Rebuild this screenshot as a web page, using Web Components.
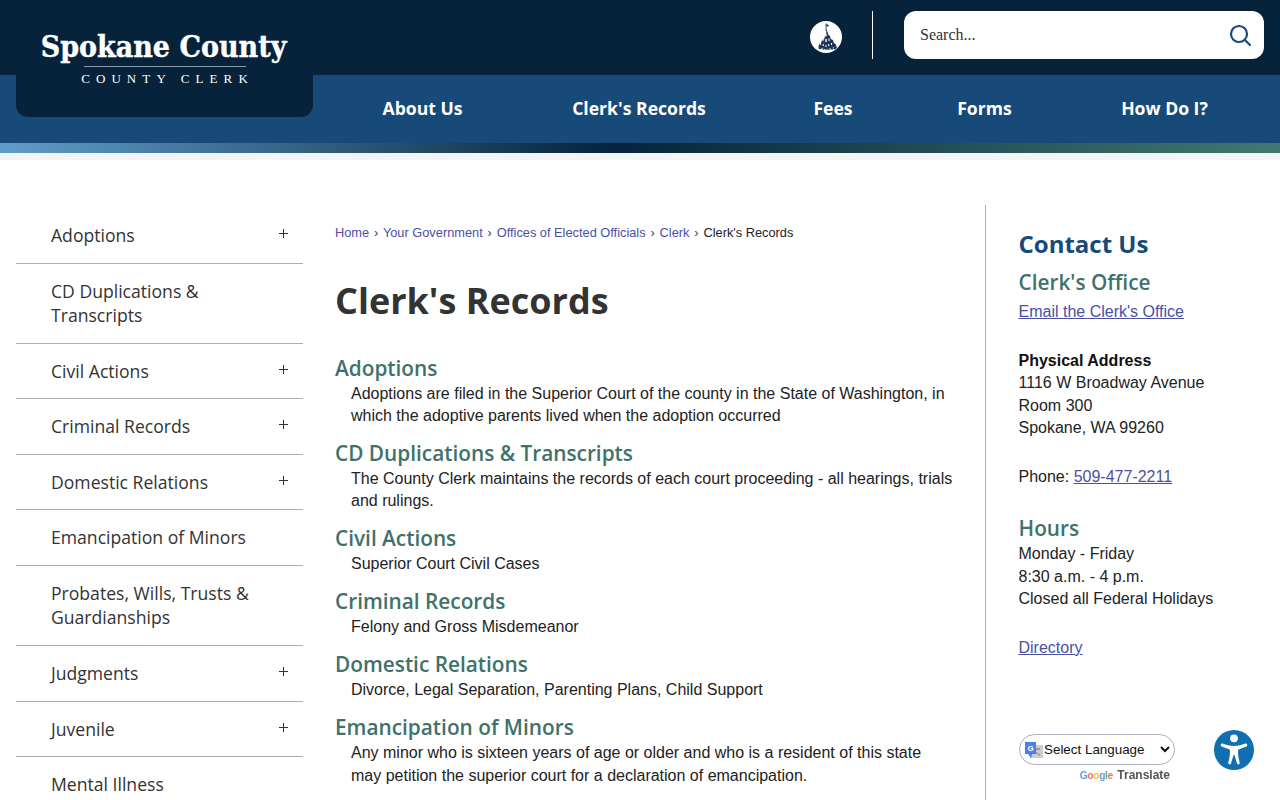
<!DOCTYPE html>
<html lang="en">
<head>
<meta charset="UTF-8">
<title>Clerk's Records</title>
<style>
    html, body { margin: 0; height: 800px; overflow: hidden; background: #fff; }
    body { font-family: "Liberation Sans", Arial, sans-serif; }
    .page { display: grid; grid-template-columns: 335px 650px 1fr; padding-top: 45px; }
</style>
</head>
<body>
<spk-header></spk-header>
<div class="page">
    <spk-side-nav>
        <spk-side-item more>Adoptions</spk-side-item>
        <spk-side-item>CD Duplications &amp; Transcripts</spk-side-item>
        <spk-side-item more>Civil Actions</spk-side-item>
        <spk-side-item more>Criminal Records</spk-side-item>
        <spk-side-item more>Domestic Relations</spk-side-item>
        <spk-side-item>Emancipation of Minors</spk-side-item>
        <spk-side-item>Probates, Wills, Trusts &amp; Guardianships</spk-side-item>
        <spk-side-item more style="padding-bottom:15.5px">Judgments</spk-side-item>
        <spk-side-item more>Juvenile</spk-side-item>
        <spk-side-item>Mental Illness</spk-side-item>
    </spk-side-nav>
    <spk-main>
        <spk-section title="Adoptions">Adoptions are filed in the Superior Court of the county in the State of Washington, in which the adoptive parents lived when the adoption occurred</spk-section>
        <spk-section title="CD Duplications &amp; Transcripts">The County Clerk maintains the records of each court proceeding - all hearings, trials and rulings.</spk-section>
        <spk-section title="Civil Actions">Superior Court Civil Cases</spk-section>
        <spk-section title="Criminal Records">Felony and Gross Misdemeanor</spk-section>
        <spk-section title="Domestic Relations">Divorce, Legal Separation, Parenting Plans, Child Support</spk-section>
        <spk-section title="Emancipation of Minors">Any minor who is sixteen years of age or older and who is a resident of this state may petition the superior court for a declaration of emancipation.</spk-section>
    </spk-main>
    <spk-contact></spk-contact>
</div>
<spk-translate></spk-translate>
<spk-access></spk-access>

<script>
class SpkHeader extends HTMLElement {
    connectedCallback() {
        this.attachShadow({ mode: 'open' });
        let items = ['About Us', "Clerk's Records", 'Fees', 'Forms', 'How Do I?'];
        this.shadowRoot.innerHTML = `
        <style>
            :host { display: block; position: relative; }
            .top { height: 75px; background: #06233b; display: flex; justify-content: flex-end; align-items: center; padding: 0 16px 5px; box-sizing: border-box; }
            .seal { width: 32px; height: 32px; margin-right: 30px; margin-top: 4px; display: block; flex: none; }
            .rule { width: 1px; height: 48px; background: #fff; margin-right: 31px; }
            .search { width: 360px; height: 48px; background: #fff; border-radius: 12px; display: flex; align-items: center; justify-content: space-between; padding: 0 12px 0 16px; box-sizing: border-box; font: 16px "Liberation Serif", serif; color: #333; }
            .search svg { width: 24px; height: 24px; }
            nav { height: 68px; background: #174a78; display: grid; grid-template-columns: 185px 248px 140px 163px 197px; align-items: center; padding: 0 0 2px 330px; box-sizing: border-box; text-align: center; }
            nav a { font: 700 17.6px "Open Sans", sans-serif; color: #fff; text-decoration: none; }
            .strip { height: 10px; background: linear-gradient(90deg, #5f9dc8 0%, #06233b 48%, #41796f 100%); }
            .pale { height: 7px; background: #f2f4f6; }
            .logo { position: absolute; left: 16px; top: 0; width: 297px; height: 117px; background: #06233b; border-radius: 0 0 12px 12px; color: #fff; text-align: center; }
            .name { font: 700 30px "DejaVu Serif Condensed", "DejaVu Serif", serif; -webkit-text-stroke: .4px #fff; margin: 28px 2px 0 0; line-height: 38px; }
            .line { width: 162px; height: 1px; background: #8b9cad; margin: 0 auto; }
            .sub { font: 13px "Liberation Serif", serif; letter-spacing: 6.1px; line-height: 16px; margin-top: 4px; padding-left: 6px; }
        </style>
        <div class="top">
            <svg class="seal" viewBox="0 0 32 32">
                <circle cx="16" cy="16" r="16" fill="#fff"/>
                <path d="M15.600 2.500h.8v7h-.8z" fill="#24405f"/>
                <path d="M16.400 2.500l2.800 2.200-2.800 1.300z" fill="#24405f"/>
                <path d="M16 7l2.600 7 1.400 1 .8 3 2.200 1 .8 3 2 1.200 1.200 3.800-2 1.400-1.500-.6-1.500 1-1.500-.7-1.500.9-1.500-.8-1.500.8-1.500-.9-1.500.7-1.500-1-1.500.6-2-1.400 1.200-3.800 2-1.200.8-3 2.200-1 .8-3 1.400-1z" fill="#1d3858"/>
                <path d="M15.400 13h1.200v2.500h-1.200zM12.500 17.500h1v2.500h-1zM18.500 17.500h1v2.500h-1zM15.300 18h1.400v3h-1.400zM10 22h1v2h-1zM12.800 23h1v2h-1zM18.200 23h1v2h-1zM21 22h1v2h-1zM15.500 24h1v2h-1zM8 26.500h1.200v.8H8zM11.500 27h1.200v.8h-1.200zM19.300 27h1.200v.8h-1.200zM22.800 26.500H24v.8h-1.200z" fill="#fff"/>
            </svg>
            <div class="rule"></div>
            <div class="search">
                <span>Search...</span>
                <svg viewBox="0 0 24 24" fill="none" stroke="#174a78" stroke-width="2.2" stroke-linecap="round"><circle cx="11" cy="11" r="8"/><path d="M17 17l5 5"/></svg>
            </div>
        </div>
        <nav>${items.map(t => `<a href="#">${t}</a>`).join('')}</nav>
        <div class="strip"></div>
        <div class="pale"></div>
        <div class="logo">
            <div class="name">Spokane County</div>
            <div class="line"></div>
            <div class="sub">COUNTY CLERK</div>
        </div>
        `;
    }
}

class SpkSideNav extends HTMLElement {
    connectedCallback() {
        this.attachShadow({ mode: 'open' });
        this.shadowRoot.innerHTML = `
        <style>
            :host { display: block; padding: 3px 32px 0 16px; }
        </style>
        <slot></slot>
        `;
    }
}

class SpkSideItem extends HTMLElement {
    connectedCallback() {
        this.attachShadow({ mode: 'open' });
        let plus = this.hasAttribute('more') ? '<svg viewBox="0 0 9 9"><path d="M4.500 0v9M0 4.500h9" stroke="#333" fill="none"/></svg>' : '';
        this.shadowRoot.innerHTML = `
        <style>
            :host { display: block; position: relative; border-bottom: 1px solid #a9adb5; padding: 15px 50px 15px 35px; font: 17.6px/24.5px "Open Sans", sans-serif; color: #333; }
            svg { position: absolute; right: 15px; top: 21px; width: 9px; height: 9px; }
        </style>
        <slot></slot>${plus}
        `;
    }
}

class SpkMain extends HTMLElement {
    connectedCallback() {
        this.attachShadow({ mode: 'open' });
        this.shadowRoot.innerHTML = `
        <style>
            :host { display: block; padding-right: 32px; }
            .crumbs { font-size: 12.8px; line-height: 16px; color: #222; margin-top: 20px; }
            .crumbs a { color: #4a50a5; text-decoration: none; }
            .crumbs i { font-style: normal; margin: 0 1.3px; color: #444; }
            h1 { font: 700 36px/44px "Open Sans", sans-serif; color: #333; margin: 38px 0 31.6px; }
        </style>
        <div class="crumbs">
            <a href="#">Home</a> <i>›</i> <a href="#">Your Government</a> <i>›</i> <a href="#">Offices of Elected Officials</a> <i>›</i> <a href="#">Clerk</a> <i>›</i> Clerk's Records
        </div>
        <h1>Clerk's Records</h1>
        <slot></slot>
        `;
    }
}

class SpkSection extends HTMLElement {
    connectedCallback() {
        this.attachShadow({ mode: 'open' });
        this.shadowRoot.innerHTML = `
        <style>
            :host { display: block; margin-bottom: 12.6px; }
            h2 { font: 600 20.8px/27.6px "Open Sans", sans-serif; color: #41716b; margin: 0 0 .4px; }
            div { font-size: 16px; line-height: 22.4px; color: #222; padding-left: 16px; }
        </style>
        <h2>${this.getAttribute('title').replace('&', '&amp;')}</h2>
        <div><slot></slot></div>
        `;
    }
}

class SpkContact extends HTMLElement {
    connectedCallback() {
        this.attachShadow({ mode: 'open' });
        this.shadowRoot.innerHTML = `
        <style>
            :host { display: block; border-left: 1px solid #a9adb5; padding: 22px 0 0 32.5px; height: 600px; font-size: 16px; line-height: 22.4px; color: #222; }
            h2 { font: 700 24px/34px "Open Sans", sans-serif; color: #174a78; margin: 0 0 6px; }
            h3 { font: 600 20.8px/30px "Open Sans", sans-serif; color: #41716b; margin: 0; }
            p { margin: 0 0 26.6px; }
            p.ph { margin-bottom: 24.6px; }
            a { color: #4a50a5; }
            b { color: #111; }
        </style>
        <h2>Contact Us</h2>
        <h3>Clerk's Office</h3>
        <p style="margin-top:4px"><a href="#">Email the Clerk's Office</a></p>
        <p><b>Physical Address</b><br>1116 W Broadway Avenue<br>Room 300<br>Spokane, WA 99260</p>
        <p class="ph">Phone: <a href="#">509-477-2211</a></p>
        <h3>Hours</h3>
        <p>Monday - Friday<br>8:30 a.m. - 4 p.m.<br>Closed all Federal Holidays</p>
        <p><a href="#">Directory</a></p>
        `;
    }
}

class SpkTranslate extends HTMLElement {
    connectedCallback() {
        this.attachShadow({ mode: 'open' });
        this.shadowRoot.innerHTML = `
        <style>
            :host { display: block; position: fixed; left: 1019px; top: 734px; width: 156px; }
            .box { height: 31px; box-sizing: border-box; border: 1px solid #aab0bc; border-radius: 16px; background: #fff; display: flex; align-items: center; padding: 0 4px 0 5px; font: 13.4px "Liberation Sans", sans-serif; color: #111; }
            .box svg.g { width: 18px; height: 18px; flex: none; margin-right: 1px; }
            .box span { flex: 1; }
            .box svg.c { width: 10px; height: 7px; }
            .by { font: 700 12px "Liberation Sans", sans-serif; color: #555; text-align: right; padding-right: 5px; margin-top: 3px; line-height: 14px; }
            .by em { font: 700 10.2px "Liberation Sans", sans-serif; margin-right: 1px; letter-spacing: -.3px; opacity: .85; }
        </style>
        <div class="box">
            <svg class="g" viewBox="0 0 18 18">
                <rect x="5" y="4" width="13" height="13" fill="#ccc"/>
                <path d="M9 8h6M12 8v1M10 10c2 3 3 3 5 4" stroke="#777" fill="none"/>
                <path d="M0 1h11v12H7l-1 4-3-4H0z" fill="#4a7fe6"/>
                <text x="2.500" y="9.500" font-size="8" font-weight="700" fill="#fff" font-family="Liberation Sans">G</text>
            </svg>
            <span>Select Language</span>
            <svg class="c" viewBox="0 0 10 7"><path d="M1 1l4 4 4-4" fill="none" stroke="#111" stroke-width="2"/></svg>
        </div>
        <div class="by"><em><span style="color:#4a86e8">G</span><span style="color:#e0584c">o</span><span style="color:#f0b71c">o</span><span style="color:#4a86e8">g</span><span style="color:#3ba55c">l</span><span style="color:#e0584c">e</span></em> Translate</div>
        `;
    }
}

class SpkAccess extends HTMLElement {
    connectedCallback() {
        this.attachShadow({ mode: 'open' });
        this.shadowRoot.innerHTML = `
        <style>
            :host { display: block; position: fixed; left: 1214px; top: 730px; width: 40px; height: 40px; }
            svg { display: block; width: 40px; height: 40px; }
        </style>
        <svg viewBox="0 0 40 40">
            <circle cx="20" cy="20" r="20" fill="#0f6fb0"/>
            <circle cx="20" cy="8.300" r="3.900" fill="#fff"/>
            <path transform="translate(20 0) scale(.84 1) translate(-20 0)" d="M6.500 13.500c-.9-.3-1.900.2-2.200 1-.3.900.2 1.800 1 2.100l8.700 2.700c.7.2 1.200.9 1.200 1.600 0 4-.6 7.600-1.900 11.400-.3.900.2 1.800 1.100 2.100.9.300 1.800-.2 2.100-1.100l3-8.300h1l3 8.300c.3.900 1.200 1.400 2.100 1.100.9-.3 1.400-1.200 1.100-2.100-1.300-3.800-1.900-7.400-1.900-11.400 0-.7.500-1.400 1.200-1.600l8.700-2.700c.8-.3 1.300-1.200 1-2.100-.3-.8-1.300-1.300-2.200-1-4.200 1.300-8.800 2.600-13.500 2.600s-9.300-1.300-13.500-2.600z" fill="#fff"/>
        </svg>
        `;
    }
}

customElements.define('spk-header', SpkHeader);
customElements.define('spk-side-nav', SpkSideNav);
customElements.define('spk-side-item', SpkSideItem);
customElements.define('spk-main', SpkMain);
customElements.define('spk-section', SpkSection);
customElements.define('spk-contact', SpkContact);
customElements.define('spk-translate', SpkTranslate);
customElements.define('spk-access', SpkAccess);
</script>
</body>
</html>
